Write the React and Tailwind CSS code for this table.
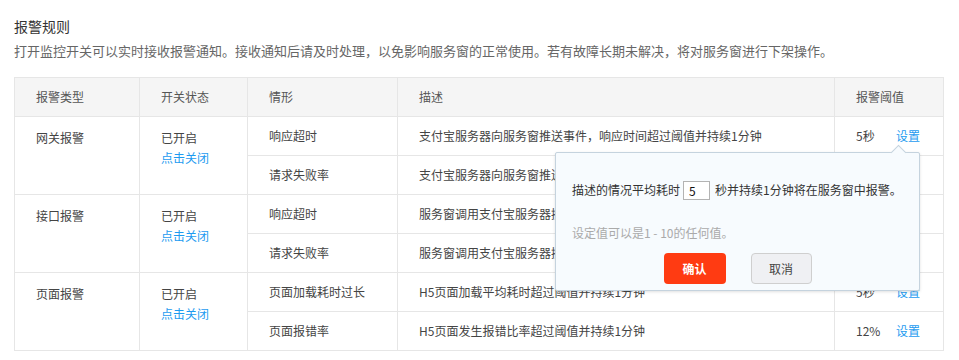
import React from 'react';

const groups = [
  {
    type: '网关报警',
    rows: [
      { name: '响应超时', desc: '支付宝服务器向服务窗推送事件，响应时间超过阈值并持续1分钟', value: '5秒' },
      { name: '请求失败率', desc: '支付宝服务器向服务窗推送事件，请求失败比率超过阈值并持续1分钟', value: '10%' },
    ],
  },
  {
    type: '接口报警',
    rows: [
      { name: '响应超时', desc: '服务窗调用支付宝服务器接口，响应时间超过阈值并持续1分钟', value: '5秒' },
      { name: '请求失败率', desc: '服务窗调用支付宝服务器接口，请求失败比率超过阈值并持续1分钟', value: '10%' },
    ],
  },
  {
    type: '页面报警',
    rows: [
      { name: '页面加载耗时过长', desc: 'H5页面加载平均耗时超过阈值并持续1分钟', value: '5秒' },
      { name: '页面报错率', desc: 'H5页面发生报错比率超过阈值并持续1分钟', value: '12%' },
    ],
  },
];

const cell = 'border border-[#e6e6e6] pl-[21px] pr-2 align-middle';

function ThresholdPopover() {
  return (
    <div className="absolute left-[541px] top-[75px] w-[365px] h-[139px] bg-[#f7fbfe] border border-[#c5d3de] rounded-[2px] shadow-[0_1px_3px_rgba(0,0,0,0.12)]">
      {/* arrow */}
      <div className="absolute -top-[6px] left-[337px] w-[11px] h-[11px] rotate-45 bg-[#f7fbfe] border-l border-t border-[#c5d3de]" />
      <div className="flex flex-col pl-4 pr-3 pt-[27px] text-[12px] text-[#333]">
        <div className="flex items-center h-[20px]">
          <span>描述的情况平均耗时</span>
          <input
            defaultValue="5"
            className="ml-[3px] mr-[5px] w-[27px] h-[19px] border border-[#b3b3b3] bg-white px-[5px] text-[12px] text-[#111] outline-none"
          />
          <span>秒并持续1分钟将在服务窗中报警。</span>
        </div>
        <div className="mt-[23px] h-[20px] leading-[20px] text-[#aaaaaa]">设定值可以是1 - 10的任何值。</div>
        <div className="mt-[10px] flex justify-center gap-[25px] -ml-4 -mr-3">
          <button className="w-[62px] h-[31px] rounded-[4px] bg-[#ff3b12] text-white text-[12px] font-bold">确认</button>
          <button className="w-[61px] h-[31px] rounded-[4px] bg-[#eff0f3] border border-[#cfcfcf] text-[#444] text-[12px]">取消</button>
        </div>
      </div>
    </div>
  );
}

export default function App() {
  return (
    <div className="w-[959px] h-[360px] bg-white px-[14px] pt-[16px] font-['Noto_Sans_CJK_SC','Noto_Sans',sans-serif] text-[#333] overflow-hidden">
      <h2 className="text-[14px] leading-[20px] text-[#333]">报警规则</h2>
      <p className="mt-[5px] text-[13px] leading-[20px] text-[#666]">
        打开监控开关可以实时接收报警通知。接收通知后请及时处理，以免影响服务窗的正常使用。若有故障长期未解决，将对服务窗进行下架操作。
      </p>

      <div className="relative mt-[16px] w-[929px]">
        <table className="w-[929px] border-collapse table-fixed text-[12px] text-[#444]">
          <colgroup>
            <col className="w-[125px]" />
            <col className="w-[108px]" />
            <col className="w-[150px]" />
            <col className="w-[437px]" />
            <col className="w-[109px]" />
          </colgroup>
          <thead>
            <tr className="h-[39px] bg-[#f5f5f5] text-[#555]">
              <th className={`${cell} text-left font-normal`}>报警类型</th>
              <th className={`${cell} text-left font-normal`}>开关状态</th>
              <th className={`${cell} text-left font-normal`}>情形</th>
              <th className={`${cell} text-left font-normal`}>描述</th>
              <th className={`${cell} text-left font-normal`}>报警阈值</th>
            </tr>
          </thead>
          <tbody>
            {groups.map((g) =>
              g.rows.map((r, i) => (
                <tr key={g.type + i} className="h-[39px]">
                  {i === 0 && (
                    <>
                      <td rowSpan={2} className={`${cell} align-top pt-[11px] leading-[20px]`}>{g.type}</td>
                      <td rowSpan={2} className={`${cell} align-top pt-[11px] leading-[20px]`}>
                        <div>已开启</div>
                        <div className="text-[#1d9bf0] cursor-pointer">点击关闭</div>
                      </td>
                    </>
                  )}
                  <td className={cell}>{r.name}</td>
                  <td className={`${cell} whitespace-nowrap overflow-hidden`}>{r.desc}</td>
                  <td className={cell}>
                    <span className="inline-block w-[40px]">{r.value}</span>
                    <span className="text-[#1d9bf0] cursor-pointer">设置</span>
                  </td>
                </tr>
              ))
            )}
          </tbody>
        </table>
        <ThresholdPopover />
      </div>
    </div>
  );
}
